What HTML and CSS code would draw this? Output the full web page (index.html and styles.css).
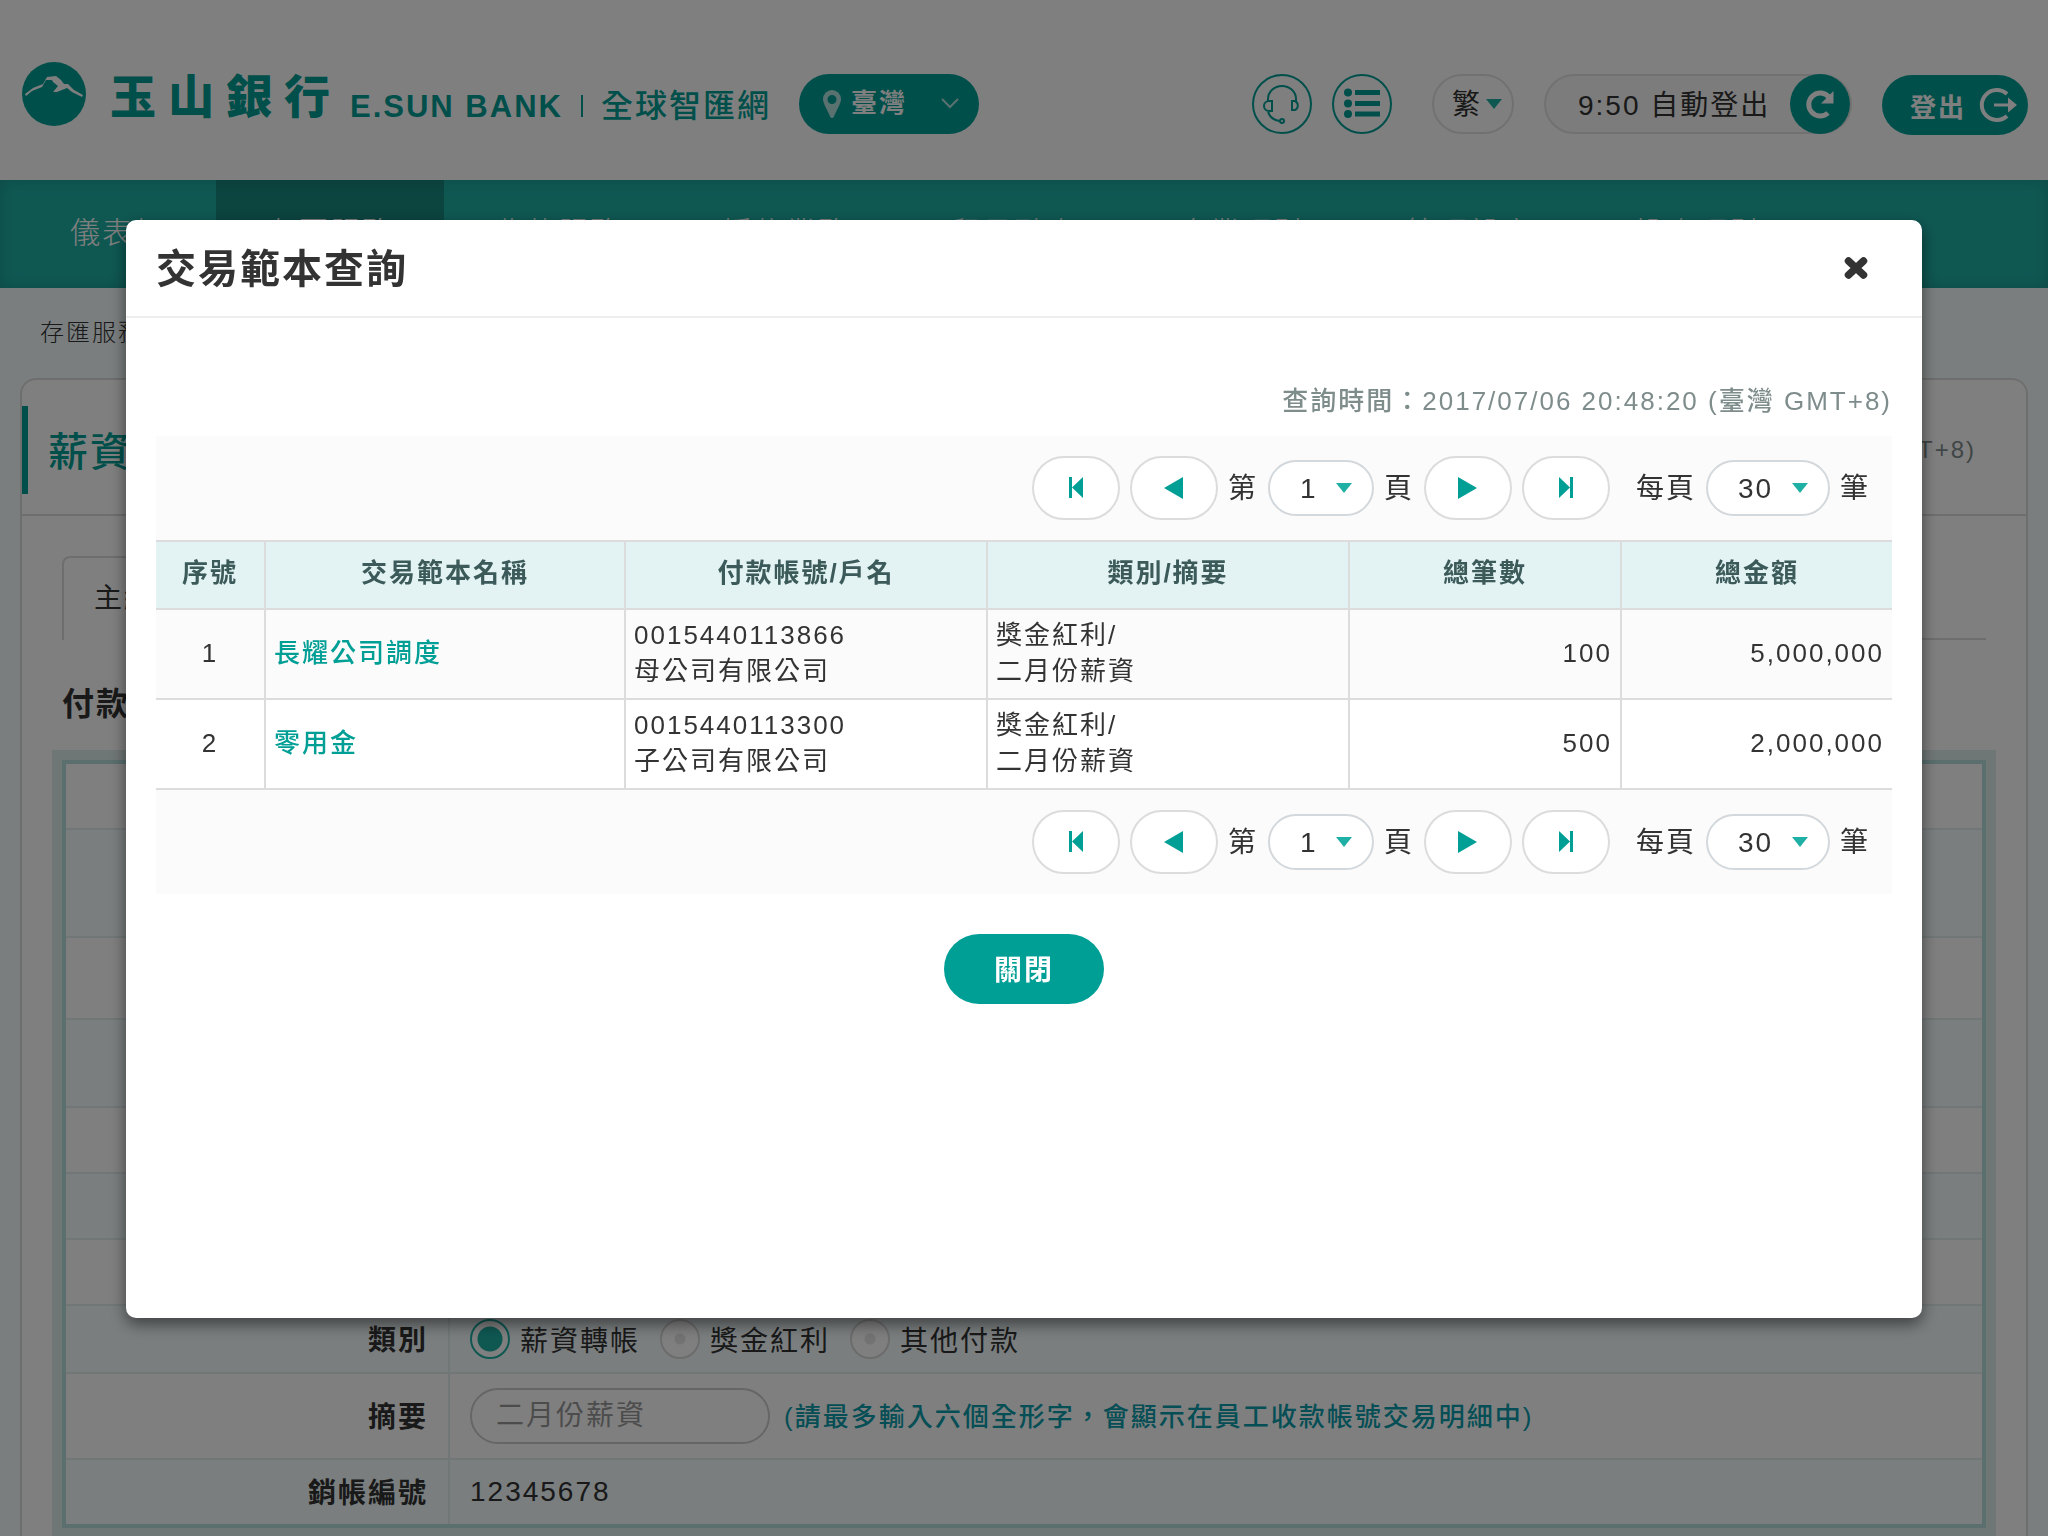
FILE: index.html
```html
<!DOCTYPE html>
<html lang="zh-TW">
<head>
<meta charset="utf-8">
<title>玉山銀行 全球智匯網</title>
<link rel="stylesheet" href="styles.css">
</head>
<body>
<header class="top">
  <a class="brand" href="#">
    <svg class="brand-mark" viewBox="0 0 64 64" aria-hidden="true"><circle cx="32" cy="32" r="32" fill="currentColor"/><path fill="#fff" d="M3 32l8-6 10-4 4-7 9-1 5 4 3 4 4 0 6 6 9 5-1 2-10-5-5-4-10 4-4 0 5-6-5-4-1-2-6 0-4 7-10 4-6 5z"/></svg>
    <span class="brand-zh">玉山銀行</span>
    <span class="brand-sub"><span class="brand-en">E.SUN BANK</span><span class="brand-bar"></span><span class="brand-site">全球智匯網</span></span>
  </a>
  <span class="pick pick-region">
    <svg class="pin" viewBox="0 0 18 28" aria-hidden="true"><path fill="currentColor" fill-rule="evenodd" d="M9 0a9 9 0 0 1 9 9c0 5-5 12-7 17.500q-2 3-4 0C5 21 0 14 0 9a9 9 0 0 1 9-9zm0 5a4.500 4.500 0 1 0 0 9 4.500 4.500 0 0 0 0-9z"/></svg>
    <select aria-label="地區"><option>臺灣</option></select>
    <svg class="chev" viewBox="0 0 18 12" aria-hidden="true"><path d="M1 1l8 8 8-8" fill="none" stroke="currentColor" stroke-width="2"/></svg>
  </span>
  <div class="tools">
    <button class="round" type="button" aria-label="客服"><svg viewBox="0 0 60 60" width="60" height="60" fill="none" stroke="currentColor" stroke-width="2"><path d="M16 27v-2a14 13 0 0 1 28 0v2M20 27v10h-3a5 5 0 0 1 0-10zM40 27v9h3a5 5 0 0 0 0-9zM16 37c1 5 5 9 12 10"/><circle cx="30" cy="47" r="2"/></svg></button>
    <button class="round" type="button" aria-label="選單"><svg viewBox="0 0 60 60" width="60" height="60" fill="currentColor"><circle cx="16" cy="18.500" r="4"/><circle cx="16" cy="29.500" r="4"/><circle cx="16" cy="40" r="4"/><path d="M23 16h25v5H23zM23 27h25v5H23zM23 37.500h25v5H23z"/></svg></button>
    <span class="pick pick-lang">
      <select aria-label="語言"><option>繁</option></select>
      <svg class="tri" viewBox="0 0 16 10" aria-hidden="true"><path d="M0 0h16l-8 10z" fill="currentColor"/></svg>
    </span>
    <div class="timer"><span>9:50 自動登出</span><button class="refresh" type="button" aria-label="重新計時"><svg viewBox="0 0 60 60" width="60" height="60"><path d="M38 39a11.500 11.500 0 1 1 1-16" fill="none" stroke="#fff" stroke-width="5"/><path d="M43.500 17v12.500H31z" fill="#fff"/></svg></button></div>
    <button class="logout" type="button">登出<svg viewBox="0 0 40 36" width="40" height="36"><path d="M29 7a15 15 0 1 0 0 22" fill="none" stroke="#fff" stroke-width="4"/><path d="M16 16.500h14v-6l9 7.500-9 7.500v-6H16z" fill="#fff"/></svg></button>
  </div>
</header>

<nav class="menu">
  <a href="#">儀表板</a><a href="#" class="is-on">存匯服務</a><a href="#">收款服務</a><a href="#">授信業務</a><a href="#">貿易融資</a><a href="#">企業理財</a><a href="#">管理設定</a><a href="#">投資理財</a>
</nav>

<main class="page">
  <p class="crumb">存匯服務 &gt; 薪資轉帳</p>
  <section class="card">
    <header class="card-head">
      <h1>薪資轉帳</h1>
      <span class="card-time">(臺灣 GMT+8)</span>
    </header>
    <div class="card-body">
      <div class="tabs"><a href="#" class="tab">主給付</a></div>
      <h2>付款資料</h2>
      <div class="panel">
        <form class="form">
          <div class="row"></div>
          <div class="row row-108"></div>
          <div class="row row-82"></div>
          <div class="row row-88"></div>
          <div class="row"></div>
          <div class="row"></div>
          <div class="row"></div>
          <div class="row row-68">
            <span class="name" id="kind">類別</span>
            <div class="field" role="radiogroup" aria-labelledby="kind">
              <label class="radio"><input type="radio" name="kind" checked>薪資轉帳</label>
              <label class="radio"><input type="radio" name="kind">獎金紅利</label>
              <label class="radio"><input type="radio" name="kind">其他付款</label>
            </div>
          </div>
          <div class="row row-86">
            <label class="name" for="memo">摘要</label>
            <div class="field"><input class="text" id="memo" type="text" placeholder="二月份薪資"><span class="hint">(請最多輸入六個全形字，會顯示在員工收款帳號交易明細中)</span></div>
          </div>
          <div class="row row-last">
            <span class="name">銷帳編號</span>
            <div class="field">12345678</div>
          </div>
        </form>
      </div>
    </div>
  </section>
</main>

<div class="shade">
  <section class="modal" role="dialog" aria-modal="true" aria-labelledby="dlg">
    <header class="modal-head">
      <h2 id="dlg">交易範本查詢</h2>
      <button class="x" type="button" aria-label="關閉視窗"><svg viewBox="0 0 24 24" width="24" height="24"><path d="M4.500 5l15 14M19.500 5l-15 14" stroke="currentColor" stroke-width="7.500" stroke-linecap="round"/></svg></button>
    </header>
    <div class="modal-body">
      <p class="stamp">查詢時間：2017/07/06 20:48:20 (臺灣 GMT+8)</p>
      <div class="pager">
        <button type="button" aria-label="第一頁"><svg viewBox="0 0 14 22" width="14" height="22"><path d="M0 0h3v21H0zM14 0v21L3 10.500z" fill="currentColor"/></svg></button>
        <button type="button" aria-label="上一頁"><svg viewBox="0 0 19 22" width="19" height="22"><path d="M19 0v22L0 11z" fill="currentColor"/></svg></button>
        <label class="word" for="page-a">第</label>
        <span class="pick pick-page"><select id="page-a"><option>1</option></select><svg class="tri" viewBox="0 0 16 10" aria-hidden="true"><path d="M0 0h16l-8 10z" fill="currentColor"/></svg></span>
        <span class="word">頁</span>
        <button type="button" aria-label="下一頁"><svg viewBox="0 0 19 22" width="19" height="22"><path d="M0 0v22l19-11z" fill="currentColor"/></svg></button>
        <button type="button" aria-label="最末頁"><svg viewBox="0 0 14 22" width="14" height="22"><path d="M11 0h3v21h-3zM0 0v21l11-10.500z" fill="currentColor"/></svg></button>
        <label class="word per" for="size-a">每頁</label>
        <span class="pick pick-size"><select id="size-a"><option>30</option></select><svg class="tri" viewBox="0 0 16 10" aria-hidden="true"><path d="M0 0h16l-8 10z" fill="currentColor"/></svg></span>
        <span class="word">筆</span>
      </div>
      <table class="list">
        <colgroup><col class="c-no"><col class="c-name"><col><col><col class="c-count"><col class="c-sum"></colgroup>
        <thead><tr><th>序號</th><th>交易範本名稱</th><th>付款帳號/戶名</th><th>類別/摘要</th><th>總筆數</th><th>總金額</th></tr></thead>
        <tbody>
          <tr><td class="mid">1</td><td><a href="#">長耀公司調度</a></td><td>0015440113866<br>母公司有限公司</td><td>獎金紅利/<br>二月份薪資</td><td class="num">100</td><td class="num">5,000,000</td></tr>
          <tr><td class="mid">2</td><td><a href="#">零用金</a></td><td>0015440113300<br>子公司有限公司</td><td>獎金紅利/<br>二月份薪資</td><td class="num">500</td><td class="num">2,000,000</td></tr>
        </tbody>
      </table>
      <div class="pager">
        <button type="button" aria-label="第一頁"><svg viewBox="0 0 14 22" width="14" height="22"><path d="M0 0h3v21H0zM14 0v21L3 10.500z" fill="currentColor"/></svg></button>
        <button type="button" aria-label="上一頁"><svg viewBox="0 0 19 22" width="19" height="22"><path d="M19 0v22L0 11z" fill="currentColor"/></svg></button>
        <label class="word" for="page-b">第</label>
        <span class="pick pick-page"><select id="page-b"><option>1</option></select><svg class="tri" viewBox="0 0 16 10" aria-hidden="true"><path d="M0 0h16l-8 10z" fill="currentColor"/></svg></span>
        <span class="word">頁</span>
        <button type="button" aria-label="下一頁"><svg viewBox="0 0 19 22" width="19" height="22"><path d="M0 0v22l19-11z" fill="currentColor"/></svg></button>
        <button type="button" aria-label="最末頁"><svg viewBox="0 0 14 22" width="14" height="22"><path d="M11 0h3v21h-3zM0 0v21l11-10.500z" fill="currentColor"/></svg></button>
        <label class="word per" for="size-b">每頁</label>
        <span class="pick pick-size"><select id="size-b"><option>30</option></select><svg class="tri" viewBox="0 0 16 10" aria-hidden="true"><path d="M0 0h16l-8 10z" fill="currentColor"/></svg></span>
        <span class="word">筆</span>
      </div>
      <button class="close" type="button">關閉</button>
    </div>
  </section>
</div>
</body>
</html>
```

FILE: styles.css
```css
:root {
  --teal: #009f96;
  --nav: #1fb0a5;
  --ink: #333;
  --line: #dcdcdc;
}
* { box-sizing: border-box; }
html, body { height: 100%; }
body {
  margin: 0;
  overflow: hidden;
  background: #f4fcfe;
  color: var(--ink);
  font-family: "Liberation Sans", "Noto Sans CJK TC", sans-serif;
  font-size: 28px;
  letter-spacing: 2px;
}
h1, h2, p { margin: 0; }
a { color: inherit; text-decoration: none; }
button, select, input { font: inherit; letter-spacing: inherit; color: inherit; margin: 0; padding: 0; }
button { display: inline-flex; align-items: center; justify-content: center; border: 0; background: none; }
svg { display: block; flex: none; }

/* drop-downs: the arrow shares the select's grid cell */
.pick { display: inline-grid; align-items: center; }
.pick > * { grid-area: 1 / 1; }
.pick select {
  appearance: none;
  width: 100%;
  height: 100%;
  border: 2px solid #d3d8dc;
  border-radius: 30px;
  background: #fff;
  outline: 0;
}
.pick svg { justify-self: end; pointer-events: none; z-index: 1; }
.tri { width: 16px; height: 10px; color: #1fb0a5; }

/* header */
.top {
  display: flex;
  align-items: center;
  height: 180px;
  padding: 28px 20px 0 22px;
  background: #fff;
}
.brand { display: flex; align-items: flex-start; height: 84px; color: var(--teal); }
.brand-mark { width: 64px; height: 64px; }
.brand-zh { margin-left: 24px; font-size: 46px; font-weight: 900; line-height: 70px; letter-spacing: 12px; }
.brand-sub { display: flex; align-items: baseline; margin-left: 8px; padding-top: 20px; line-height: 48px; }
.brand-en { font-size: 31px; font-weight: 700; }
.brand-bar { width: 2px; height: 22px; margin: 0 18px; background: currentColor; }
.brand-site { font-size: 32px; font-weight: 500; }
.pick-region { width: 180px; height: 60px; margin-left: 28px; color: #fff; }
.pick-region select { padding: 0 0 2px 52px; border: 0; background: var(--teal); font-size: 26px; font-weight: 700; }
.pick-region .pin { justify-self: start; width: 18px; height: 28px; margin-left: 24px; opacity: .7; }
.pick-region .chev { width: 18px; height: 12px; margin-right: 20px; opacity: .7; }
.tools { display: flex; align-items: center; margin-left: auto; }
.round { width: 60px; height: 60px; border: 2px solid var(--teal); border-radius: 50%; color: var(--teal); }
.round + .round { margin-left: 20px; }
.pick-lang { width: 82px; height: 60px; margin-left: 40px; }
.pick-lang select { padding-left: 18px; border-color: #e3e3e3; }
.pick-lang .tri { margin-right: 12px; }
.timer {
  display: flex;
  align-items: center;
  justify-content: space-between;
  width: 308px;
  height: 60px;
  margin-left: 30px;
  padding-left: 32px;
  border: 2px solid #e3e3e3;
  border-radius: 30px;
  background: #f8f8f8;
}
.timer span { padding-bottom: 2px; }
.refresh { width: 60px; height: 60px; border-radius: 50%; background: var(--teal); }
.logout {
  gap: 12px;
  width: 146px;
  height: 60px;
  margin: 2px 0 0 30px;
  padding-left: 18px;
  border-radius: 30px;
  background: var(--teal);
  color: #fff;
  font-size: 26px;
  font-weight: 700;
}

/* main menu */
.menu {
  display: flex;
  height: 108px;
  padding-left: 20px;
  background: var(--nav);
  box-shadow: inset 0 0 16px rgba(0, 0, 0, .15);
  color: #fff;
  font-size: 30px;
  font-weight: 300;
  line-height: 106px;
}
.menu a { padding: 0 50px; }
.menu .is-on { background: rgba(0, 0, 0, .22); }

/* page behind the dialog */
.page { padding: 0 20px; }
.crumb { padding: 0 20px; font-size: 24px; font-weight: 300; line-height: 90px; }
.card { border: 2px solid var(--line); border-radius: 16px; background: #fff; }
.card-head {
  display: flex;
  align-items: center;
  justify-content: space-between;
  padding: 26px 50px 20px 0;
  border-bottom: 2px solid var(--line);
}
.card-head h1 {
  padding: 4px 0 0 20px;
  border-left: 6px solid var(--teal);
  color: var(--teal);
  font-size: 40px;
  font-weight: 500;
  line-height: 84px;
}
.card-time { padding-bottom: 6px; color: #7f8c8c; font-size: 24px; font-weight: 500; }
.card-body { padding: 40px 40px 60px; }
.tabs { display: flex; height: 84px; }
.tabs::after { content: ""; flex: 1; border-bottom: 2px solid var(--line); }
.tab { width: 200px; padding-left: 30px; border: 2px solid var(--line); border-bottom: 0; border-radius: 8px 8px 0 0; line-height: 82px; }
.card-body h2 { padding: 40px 0 22px; font-size: 32px; line-height: 48px; }
.panel { margin: 0 -10px; padding: 10px; background: #dfeeec; }
.form { border: 4px solid #b5dedd; background: #fff; }
.row { display: flex; align-items: stretch; height: 66px; border-bottom: 2px solid #e2eeee; }
.row:nth-child(even) { background: #f4fcfe; }
.row-108 { height: 108px; }
.row-82 { height: 82px; }
.row-88 { height: 88px; }
.row-68 { height: 68px; }
.row-86 { height: 86px; }
.row-last { height: 64px; border-bottom: 0; }
.name { display: flex; align-items: center; justify-content: flex-end; width: 384px; padding: 0 20px 2px 0; border-right: 2px solid #e2eeee; font-weight: 700; }
.field { display: flex; flex: 1; align-items: center; gap: 20px; padding-left: 20px; }
.radio { display: flex; align-items: center; gap: 10px; }
.radio input {
  appearance: none;
  width: 40px;
  height: 40px;
  border: 2px solid #d8d8d8;
  border-radius: 50%;
  background: radial-gradient(circle, #e6e6e6 5px, #fff 6px);
}
.radio input:checked { border-color: var(--nav); background: radial-gradient(circle, var(--nav) 12px, #fff 13px); }
.text { width: 300px; height: 56px; padding-left: 24px; border: 2px solid #ccc; border-radius: 28px; background: #fff; }
.text::placeholder { color: #999; opacity: 1; }
.hint { margin-left: -6px; padding-bottom: 4px; color: #0a9dab; font-size: 26px; font-weight: 500; }

/* dialog */
.shade { position: fixed; inset: 0; z-index: 10; padding: 220px 126px; background: rgba(0, 0, 0, .5); }
.modal {
  min-height: calc(100vh - 438px);
  border-radius: 10px;
  background: #fff;
  box-shadow: 0 6px 16px rgba(0, 0, 0, .5);
}
.modal-head {
  display: flex;
  align-items: center;
  justify-content: space-between;
  height: 98px;
  padding: 0 54px 0 30px;
  border-bottom: 2px solid #eee;
}
.modal-head h2 { padding-bottom: 4px; font-size: 40px; }
.x { color: #333; }
.modal-body { display: flex; flex-direction: column; padding: 60px 30px; }
.stamp { margin-bottom: 12px; color: #7f8c8c; font-size: 26px; font-weight: 500; line-height: 46px; text-align: right; }
.pager { display: flex; align-items: center; justify-content: flex-end; gap: 10px; height: 104px; padding-right: 22px; background: #fbfbfb; }
.pager button { width: 88px; height: 64px; border: 2px solid var(--line); border-radius: 32px; background: #fff; color: var(--teal); }
.word { padding-bottom: 4px; }
.per { margin-left: 16px; }
.pick-page { width: 106px; height: 56px; }
.pick-size { width: 124px; height: 56px; }
.pager select { padding-left: 30px; }
.pager .tri { margin-right: 22px; }
.list { width: 100%; border-collapse: collapse; table-layout: fixed; font-size: 26px; line-height: 36px; }
.c-no { width: 109px; }
.c-name { width: 360px; }
.c-count { width: 272px; }
.c-sum { width: 271px; }
.list th, .list td { height: 90px; padding: 7px 8px 9px; border-top: 2px solid var(--line); border-bottom: 2px solid var(--line); }
.list th { height: 68px; padding: 6px 8px 10px; background: #e3f3f3; color: #3c5a5a; }
.list th + th, .list td + td { border-left: 2px solid var(--line); }
.list tbody tr:nth-child(odd) { background: #fbfbfb; }
.list a { color: var(--teal); font-weight: 500; }
.mid { text-align: center; }
.num { text-align: right; }
.close { align-self: center; width: 160px; height: 70px; margin-top: 40px; padding-bottom: 2px; border-radius: 35px; background: var(--teal); color: #fff; font-weight: 700; }
```
